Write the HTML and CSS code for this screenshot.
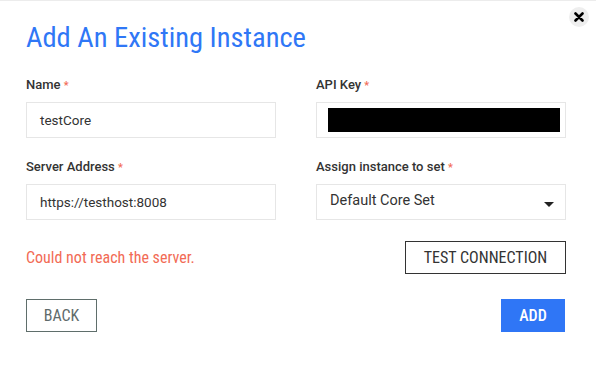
FILE: index.html
```html
<!DOCTYPE html>
<html lang="en">
<head>
  <meta charset="UTF-8">
  <title>Add An Existing Instance</title>
  <link rel="stylesheet" href="styles.css">
</head>
<body>
  <div class="dialog">
    <button class="close-btn" title="Close">
      <svg width="10" height="10" viewBox="0 0 10 10"><path d="M1.5 1.5 L8.5 8.5 M8.5 1.5 L1.5 8.5" stroke="#000" stroke-width="2.6" stroke-linecap="round"/></svg>
    </button>

    <h1 class="title">Add An Existing Instance</h1>

    <div class="form-grid">
      <div class="field">
        <label>Name <span class="req">*</span></label>
        <div class="input">testCore</div>
      </div>
      <div class="field">
        <label>API Key <span class="req">*</span></label>
        <div class="input"><span class="redacted"></span></div>
      </div>
      <div class="field">
        <label>Server Address <span class="req">*</span></label>
        <div class="input">https://testhost:8008</div>
      </div>
      <div class="field">
        <label>Assign instance to set <span class="req">*</span></label>
        <div class="input select">
          <span class="select-value">Default Core Set</span>
          <span class="caret"></span>
        </div>
      </div>
    </div>

    <div class="status-row">
      <span class="error">Could not reach the server.</span>
      <button class="btn btn-outline-dark">TEST CONNECTION</button>
    </div>

    <div class="actions">
      <button class="btn btn-back">BACK</button>
      <button class="btn btn-primary">ADD</button>
    </div>
  </div>
</body>
</html>
```

FILE: styles.css
```css
/* Base */
body {
  margin: 0;
  background: #fff;
  font-family: Roboto, 'Noto Sans', sans-serif;
  color: #333;
}

.dialog {
  position: relative;
  width: 596px;
  height: 370px;
  box-sizing: border-box;
  border-top: 1px solid #ececec;
  padding: 17px 30px 0 26px;
}

.close-btn {
  position: absolute;
  top: 6px;
  right: 7px;
  width: 20px;
  height: 20px;
  border: none;
  border-radius: 50%;
  background: #eee;
  padding: 0;
  display: flex;
  align-items: center;
  justify-content: center;
  cursor: pointer;
}

.title {
  margin: 0;
  font-family: 'Roboto Condensed', Roboto, sans-serif;
  font-weight: 400;
  font-size: 28.5px;
  line-height: 40px;
  color: #2f77f6;
}

/* Form */
.form-grid {
  margin-top: 18px;
  display: grid;
  grid-template-columns: 250px 250px;
  column-gap: 40px;
  row-gap: 20px;
}

.field label {
  display: block;
  font-size: 13px;
  font-weight: 500;
  line-height: 18px;
  color: #333;
  margin-bottom: 7px;
}

.req {
  color: #f26b55;
  font-size: 11px;
}

.input {
  height: 36px;
  box-sizing: border-box;
  border: 1px solid #e6e6e6;
  padding: 0 13px;
  display: flex;
  align-items: center;
  font-size: 13.5px;
  color: #333;
}

.redacted {
  display: block;
  flex-shrink: 0;
  width: 232px;
  height: 24px;
  background: #000;
  margin-left: -2px;
}

.select {
  justify-content: space-between;
  align-items: flex-start;
  padding-top: 7px;
  font-size: 14.5px;
}

.caret {
  margin-top: 10px;
  margin-right: -2px;
  width: 0;
  height: 0;
  border-left: 5px solid transparent;
  border-right: 5px solid transparent;
  border-top: 5px solid #222;
}

/* Status and actions */
.status-row {
  margin-top: 21px;
  display: flex;
  justify-content: space-between;
  align-items: center;
}

.error {
  font-family: 'Roboto Condensed', Roboto, sans-serif;
  font-size: 16px;
  color: #f26b55;
}

.btn {
  font-family: 'Roboto Condensed', Roboto, sans-serif;
  font-size: 16px;
  height: 33px;
  box-sizing: border-box;
  background: #fff;
  cursor: pointer;
  padding: 0 10px;
}

.btn-outline-dark {
  border: 1px solid #333;
  color: #333;
  width: 161px;
}

.actions {
  margin-top: 25px;
  display: flex;
  justify-content: space-between;
}

.btn-back {
  border: 1px solid #5f6e6b;
  color: #5f6b6b;
  width: 71px;
}

.btn-primary {
  border: none;
  background: #2f76f6;
  color: #fff;
  font-weight: 500;
  width: 64px;
  margin-right: 1px;
}
```
